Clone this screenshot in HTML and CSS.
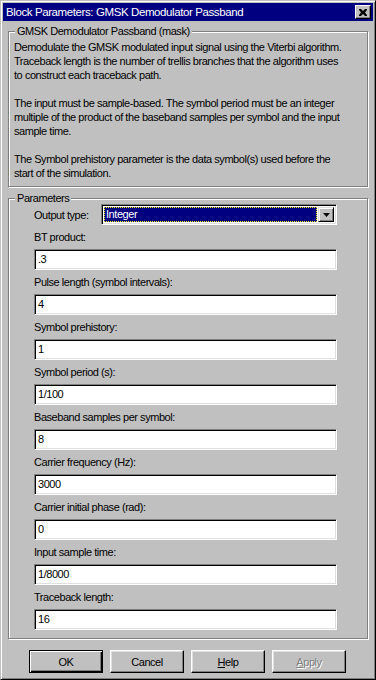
FILE: index.html
```html
<!DOCTYPE html>
<html lang="en">
<head>
    <meta charset="UTF-8">
    <meta name="viewport" content="width=device-width, initial-scale=1.0">
    <title>Block Parameters: GMSK Demodulator Passband</title>
    <link rel="stylesheet" href="styles.css">
</head>
<body>
    <div class="window">
        <div class="titlebar">
            <span class="title">Block Parameters: GMSK Demodulator Passband</span>
            <span class="close">
                <svg width="8" height="7" viewBox="0 0 8 7"><path d="M0 0h2l2 2 2-2h2v1l-2 2.5 2 2.5v1h-2l-2-2-2 2h-2v-1l2-2.5-2-2.5z" fill="#000"/></svg>
            </span>
        </div>

        <div class="group desc">
            <span class="legend">GMSK Demodulator Passband (mask)</span>
            <p>Demodulate the GMSK modulated input signal using the Viterbi algorithm.<br>Traceback length is the number of trellis branches that the algorithm uses<br>to construct each traceback path.</p>
            <p>The input must be sample-based. The symbol period must be an integer<br>multiple of the product of the baseband samples per symbol and the input<br>sample time.</p>
            <p>The Symbol prehistory parameter is the data symbol(s) used before the<br>start of the simulation.</p>
        </div>

        <div class="group params">
            <span class="legend">Parameters</span>
            <div class="select-row">
                <label>Output type:</label>
                <div class="select">
                    <span class="selected">Integer</span>
                    <span class="arrow"><svg width="7" height="4" viewBox="0 0 7 4"><path d="M0 0h7l-3.5 4z" fill="#000"/></svg></span>
                </div>
            </div>
            <div class="field"><label>BT product:</label><div class="input">.3</div></div>
            <div class="field"><label>Pulse length (symbol intervals):</label><div class="input">4</div></div>
            <div class="field"><label>Symbol prehistory:</label><div class="input">1</div></div>
            <div class="field"><label>Symbol period (s):</label><div class="input">1/100</div></div>
            <div class="field"><label>Baseband samples per symbol:</label><div class="input">8</div></div>
            <div class="field"><label>Carrier frequency (Hz):</label><div class="input">3000</div></div>
            <div class="field"><label>Carrier initial phase (rad):</label><div class="input">0</div></div>
            <div class="field"><label>Input sample time:</label><div class="input">1/8000</div></div>
            <div class="field"><label>Traceback length:</label><div class="input">16</div></div>
        </div>

        <div class="buttons">
            <span class="btn default">OK</span>
            <span class="btn">Cancel</span>
            <span class="btn"><u>H</u>elp</span>
            <span class="btn disabled"><u>A</u>pply</span>
        </div>
    </div>
</body>
</html>
```

FILE: styles.css
```css
body {
    margin: 0;
    background: #c0c0c0;
}
.window {
    width: 376px;
    height: 680px;
    box-sizing: border-box;
    padding: 2px;
    border: 1px solid;
    border-color: #c0c0c0 #000 #000 #c0c0c0;
    box-shadow: inset 1px 1px #fff, inset -1px -1px #808080;
    background: #c0c0c0;
    font-family: "Liberation Sans", Arial, sans-serif;
    font-size: 11px;
    letter-spacing: -0.45px;
    color: #000;
    display: flex;
    flex-direction: column;
}
.titlebar {
    height: 18px;
    background: #000080;
    color: #fff;
    display: flex;
    align-items: center;
    justify-content: space-between;
    padding: 0 2px 0 3px;
}
.title {
    font-size: 11.5px;
    letter-spacing: -0.4px;
    white-space: nowrap;
}
.close {
    width: 16px;
    height: 14px;
    box-sizing: border-box;
    background: #c0c0c0;
    border: 1px solid;
    border-color: #fff #000 #000 #fff;
    box-shadow: inset -1px -1px #808080;
    display: flex;
    align-items: center;
    justify-content: center;
}
.group {
    position: relative;
    margin: 10px 5px 0 5px;
    border: 1px solid #808080;
    box-shadow: inset 1px 1px #fff, 1px 1px #fff;
}
.legend {
    position: absolute;
    top: -8px;
    left: 6px;
    padding: 0 2px;
    line-height: 14px;
    background: #c0c0c0;
    white-space: nowrap;
}
.desc {
    padding: 8px 5px 6px 5px;
}
.desc p {
    margin: 0 0 14px 0;
    line-height: 14px;
    white-space: nowrap;
}
.desc p:last-child {
    margin-bottom: 0;
}
.params {
    margin-top: 11px;
    padding: 5px 30px 8px 25px;
}
.select-row {
    display: flex;
    align-items: center;
    height: 21px;
}
.select-row label {
    flex: none;
    width: 67px;
    white-space: nowrap;
}
.select {
    flex: 1;
    height: 21px;
    box-sizing: border-box;
    background: #fff;
    border: 1px solid;
    border-color: #808080 #fff #fff #808080;
    box-shadow: inset 1px 1px #000, inset -1px -1px #dfdfdf;
    padding: 2px;
    display: flex;
    gap: 1px;
}
.selected {
    flex: 1;
    background: #000080;
    color: #fff;
    outline: 1px dotted #ffff00;
    outline-offset: -1px;
    padding-left: 2px;
    line-height: 15px;
}
.arrow {
    width: 16px;
    box-sizing: border-box;
    background: #c0c0c0;
    border: 1px solid;
    border-color: #dfdfdf #000 #000 #dfdfdf;
    box-shadow: inset 1px 1px #fff, inset -1px -1px #808080;
    display: flex;
    align-items: center;
    justify-content: center;
}
.field {
    display: flex;
    flex-direction: column;
    gap: 5px;
    margin-top: 5px;
}
.field label {
    line-height: 14px;
    white-space: nowrap;
}
.input {
    height: 21px;
    box-sizing: border-box;
    background: #fff;
    border: 1px solid;
    border-color: #808080 #fff #fff #808080;
    box-shadow: inset 1px 1px #000, inset -1px -1px #dfdfdf;
    padding-left: 3px;
    line-height: 19px;
}
.buttons {
    display: flex;
    gap: 7px;
    padding: 11px 0 0 26px;
}
.btn {
    width: 74px;
    height: 23px;
    box-sizing: border-box;
    border: 1px solid;
    border-color: #fff #000 #000 #fff;
    box-shadow: inset -1px -1px #808080, inset 1px 1px #dfdfdf;
    display: flex;
    align-items: center;
    justify-content: center;
}
.btn.default {
    border: 1px solid #000;
    box-shadow: inset 1px 1px #fff, inset -1px -1px #000, inset -2px -2px #808080;
}
.btn.disabled {
    color: #808080;
    text-shadow: 1px 1px #fff;
}
```
